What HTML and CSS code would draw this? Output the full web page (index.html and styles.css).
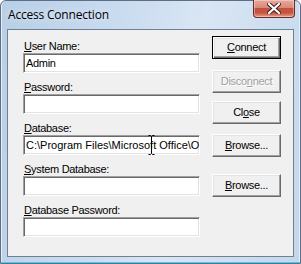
FILE: index.html
```html
<!DOCTYPE html>
<html>
<head>
<meta charset="utf-8">
<link rel="stylesheet" href="styles.css">
</head>
<body>
<div class="window">
  <div class="titlebar">
    <span class="title">Access Connection</span>
    <div class="close">
      <svg width="14" height="11" viewBox="0 0 14 11">
        <path d="M2 1 L12 10 M12 1 L2 10" stroke="#3a1a1a" stroke-width="4" stroke-linecap="square" fill="none"/>
        <path d="M2 1 L12 10 M12 1 L2 10" stroke="#ffffff" stroke-width="2.2" stroke-linecap="square" fill="none"/>
      </svg>
    </div>
  </div>
  <div class="client">
    <div class="fields">
      <div class="group">
        <div class="label"><u>U</u>ser Name:</div>
        <div class="field">Admin</div>
      </div>
      <div class="group">
        <div class="label"><u>P</u>assword:</div>
        <div class="field"></div>
      </div>
      <div class="group">
        <div class="label"><u>D</u>atabase:</div>
        <div class="field path">C:\Program Files\Microsoft Office\O</div>
      </div>
      <div class="group">
        <div class="label"><u>S</u>ystem Database:</div>
        <div class="field"></div>
      </div>
      <div class="group">
        <div class="label"><u>D</u>atabase Password:</div>
        <div class="field"></div>
      </div>
    </div>
    <div class="buttons">
      <div class="btn default b-connect"><u>C</u>onnect</div>
      <div class="btn disabled b-disconnect">Disco<u>n</u>nect</div>
      <div class="btn b-close">Cl<u>o</u>se</div>
      <div class="btn b-browse1"><u>B</u>rowse...</div>
      <div class="btn b-browse2"><u>B</u>rowse...</div>
    </div>
    <svg class="ibeam" width="9" height="22" viewBox="0 0 9 22">
      <path d="M1.5 1.5 H3.5 L4.5 2.5 L5.5 1.5 H7.5 M4.5 2.5 V19.5 M1.5 20.5 H3.5 L4.5 19.5 L5.5 20.5 H7.5" stroke="#000" stroke-width="1" fill="none"/>
    </svg>
  </div>
</div>
</body>
</html>
```

FILE: styles.css
```css
html, body {
  margin: 0;
  padding: 0;
  background: #ffffff;
}

.window {
  position: relative;
  width: 301px;
  height: 264px;
  box-sizing: border-box;
  border: 1px solid #5c6f86;
  border-radius: 6px 6px 0 0;
  background: linear-gradient(100deg, #b8cfe7 0%, #c9dbef 35%, #d9e6f4 60%, #c3d7ec 100%);
  box-shadow: inset 0 -1px 0 #3fd0f0, inset 1px 0 0 #e6eff8, inset -1px 0 0 #e6eff8;
  display: flex;
  flex-direction: column;
}

.titlebar {
  height: 28px;
  display: flex;
  align-items: flex-start;
  padding-left: 7px;
  padding-right: 5px;
}

.title {
  font-family: "Open Sans", sans-serif;
  font-size: 12px;
  line-height: 16px;
  margin-top: 6px;
  color: #000;
  letter-spacing: -0.2px;
  text-shadow: 0 0 6px rgba(255,255,255,0.9);
}

.close {
  margin-left: auto;
  margin-top: -1px;
  width: 42px;
  height: 18px;
  box-sizing: border-box;
  border: 1px solid #6b2b22;
  border-top: none;
  border-radius: 0 0 4px 4px;
  background: linear-gradient(#e9a99b 0%, #d88a7c 45%, #c3523d 50%, #c6533e 75%, #e2a08c 100%);
  box-shadow: inset 0 0 0 1px rgba(255,255,255,0.35);
  display: flex;
  align-items: center;
  justify-content: center;
}

.client {
  position: relative;
  flex: 1;
  margin: 0 6px 6px 6px;
  border: 1px solid #6f7f94;
  background: #f0f0f0;
  display: flex;
  font-family: "Liberation Sans", Arial, sans-serif;
  font-size: 11px;
  letter-spacing: -0.3px;
  color: #000;
}

.fields {
  padding-top: 9px;
  padding-left: 15px;
  display: flex;
  flex-direction: column;
  gap: 7px;
}

.label {
  height: 14px;
  line-height: 14px;
  padding-left: 1px;
  white-space: nowrap;
}

.field {
  width: 177px;
  height: 20px;
  box-sizing: border-box;
  background: #fff;
  border: 1px solid;
  border-color: #a0a0a0 #ffffff #ffffff #a0a0a0;
  box-shadow: inset 1px 1px 0 #696969, inset -1px -1px 0 #e3e3e3;
  padding: 0 2px 0 2px;
  line-height: 18px;
  white-space: nowrap;
  overflow: hidden;
}

.field.path {
  letter-spacing: 0;
}

.buttons {
  margin-left: 12px;
  display: flex;
  flex-direction: column;
}

.btn {
  width: 69px;
  height: 23px;
  box-sizing: border-box;
  border: 1px solid;
  border-color: #ffffff #696969 #696969 #ffffff;
  box-shadow: inset -1px -1px 0 #a0a0a0, inset 1px 1px 0 #e3e3e3;
  background: #f0f0f0;
  text-align: center;
  line-height: 21px;
  white-space: nowrap;
}

.btn.default {
  border: 1px solid #000;
  box-shadow: inset 1px 1px 0 #ffffff, inset -1px -1px 0 #696969, inset -2px -2px 0 #a0a0a0, inset 2px 2px 0 #e3e3e3;
}

.btn.disabled {
  color: #a0a0a0;
  text-shadow: 1px 1px 0 #ffffff;
}

.b-connect { margin-top: 6px; }
.b-disconnect { margin-top: 11px; }
.b-close { margin-top: 8px; }
.b-browse1 { margin-top: 10px; }
.b-browse2 { margin-top: 17px; }

.ibeam {
  position: absolute;
  left: 139px;
  top: 104px;
}
```
